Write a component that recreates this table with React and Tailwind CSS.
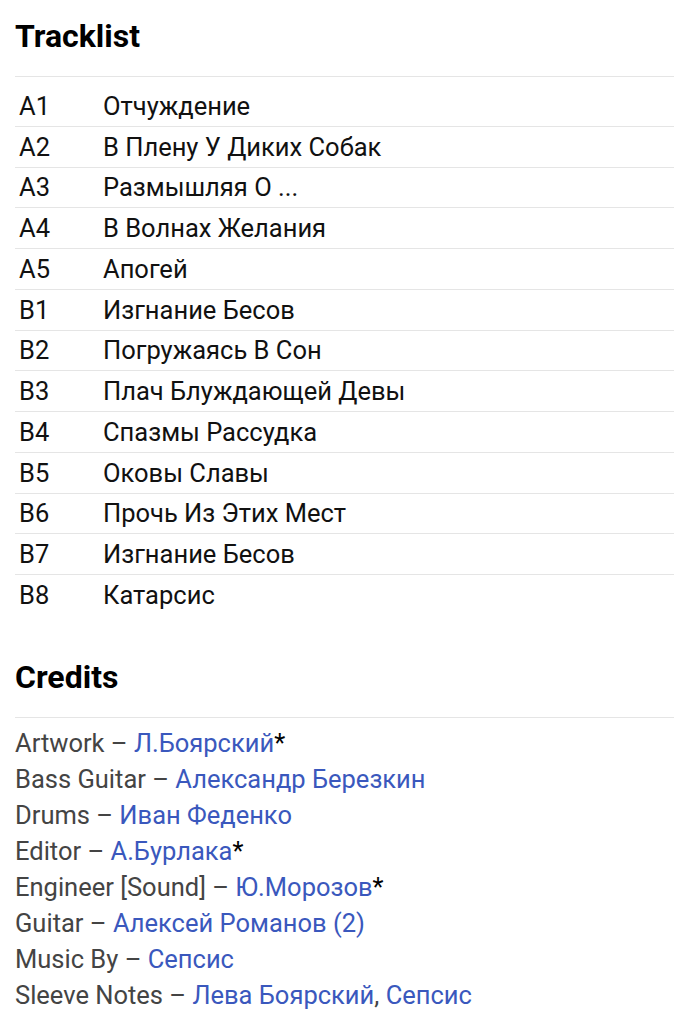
import React from "react";

const tracks = [
  ["A1", "Отчуждение"],
  ["A2", "В Плену У Диких Собак"],
  ["A3", "Размышляя О ..."],
  ["A4", "В Волнах Желания"],
  ["A5", "Апогей"],
  ["B1", "Изгнание Бесов"],
  ["B2", "Погружаясь В Сон"],
  ["B3", "Плач Блуждающей Девы"],
  ["B4", "Спазмы Рассудка"],
  ["B5", "Оковы Славы"],
  ["B6", "Прочь Из Этих Мест"],
  ["B7", "Изгнание Бесов"],
  ["B8", "Катарсис"],
];

const credits = [
  ["Artwork", [["Л.Боярский", true]]],
  ["Bass Guitar", [["Александр Березкин", false]]],
  ["Drums", [["Иван Феденко", false]]],
  ["Editor", [["А.Бурлака", true]]],
  ["Engineer [Sound]", [["Ю.Морозов", true]]],
  ["Guitar", [["Алексей Романов (2)", false]]],
  ["Music By", [["Сепсис", false]]],
  ["Sleeve Notes", [["Лева Боярский", false], ["Сепсис", false]]],
];

export default function App() {
  return (
    <div
      className="bg-white px-[15px] pt-[16px] text-[#111]"
      style={{ fontFamily: "Roboto, 'Noto Sans', sans-serif" }}
    >
      <h2 className="text-[32px] font-bold leading-[40px] text-black">Tracklist</h2>
      <div className="mt-[20px] border-t border-[#e5e5e5] pt-[9px]">
        {tracks.map(([pos, title]) => (
          <div
            key={pos}
            className="flex h-[40.75px] items-center border-b border-[#e5e5e5] text-[25.5px] last:border-b-0"
          >
            <span className="w-[88px] pl-[4px]">{pos}</span>
            <span>{title}</span>
          </div>
        ))}
      </div>
      <h2 className="mt-[41px] text-[32px] font-bold leading-[40px] text-black">Credits</h2>
      <div className="mt-[20px] border-t border-[#e5e5e5] pt-[7px]">
        {credits.map(([role, names]) => (
          <div key={role} className="h-[36px] text-[25.5px] leading-[36px] text-[#444]">
            {role} –{" "}
            {names.map(([n, star], i) => (
              <React.Fragment key={n}>
                {i > 0 && <span className="text-[#444]">, </span>}
                <span className="text-[#3a58bd]">{n}</span>
                {star && <span className="text-black">*</span>}
              </React.Fragment>
            ))}
          </div>
        ))}
      </div>
    </div>
  );
}
